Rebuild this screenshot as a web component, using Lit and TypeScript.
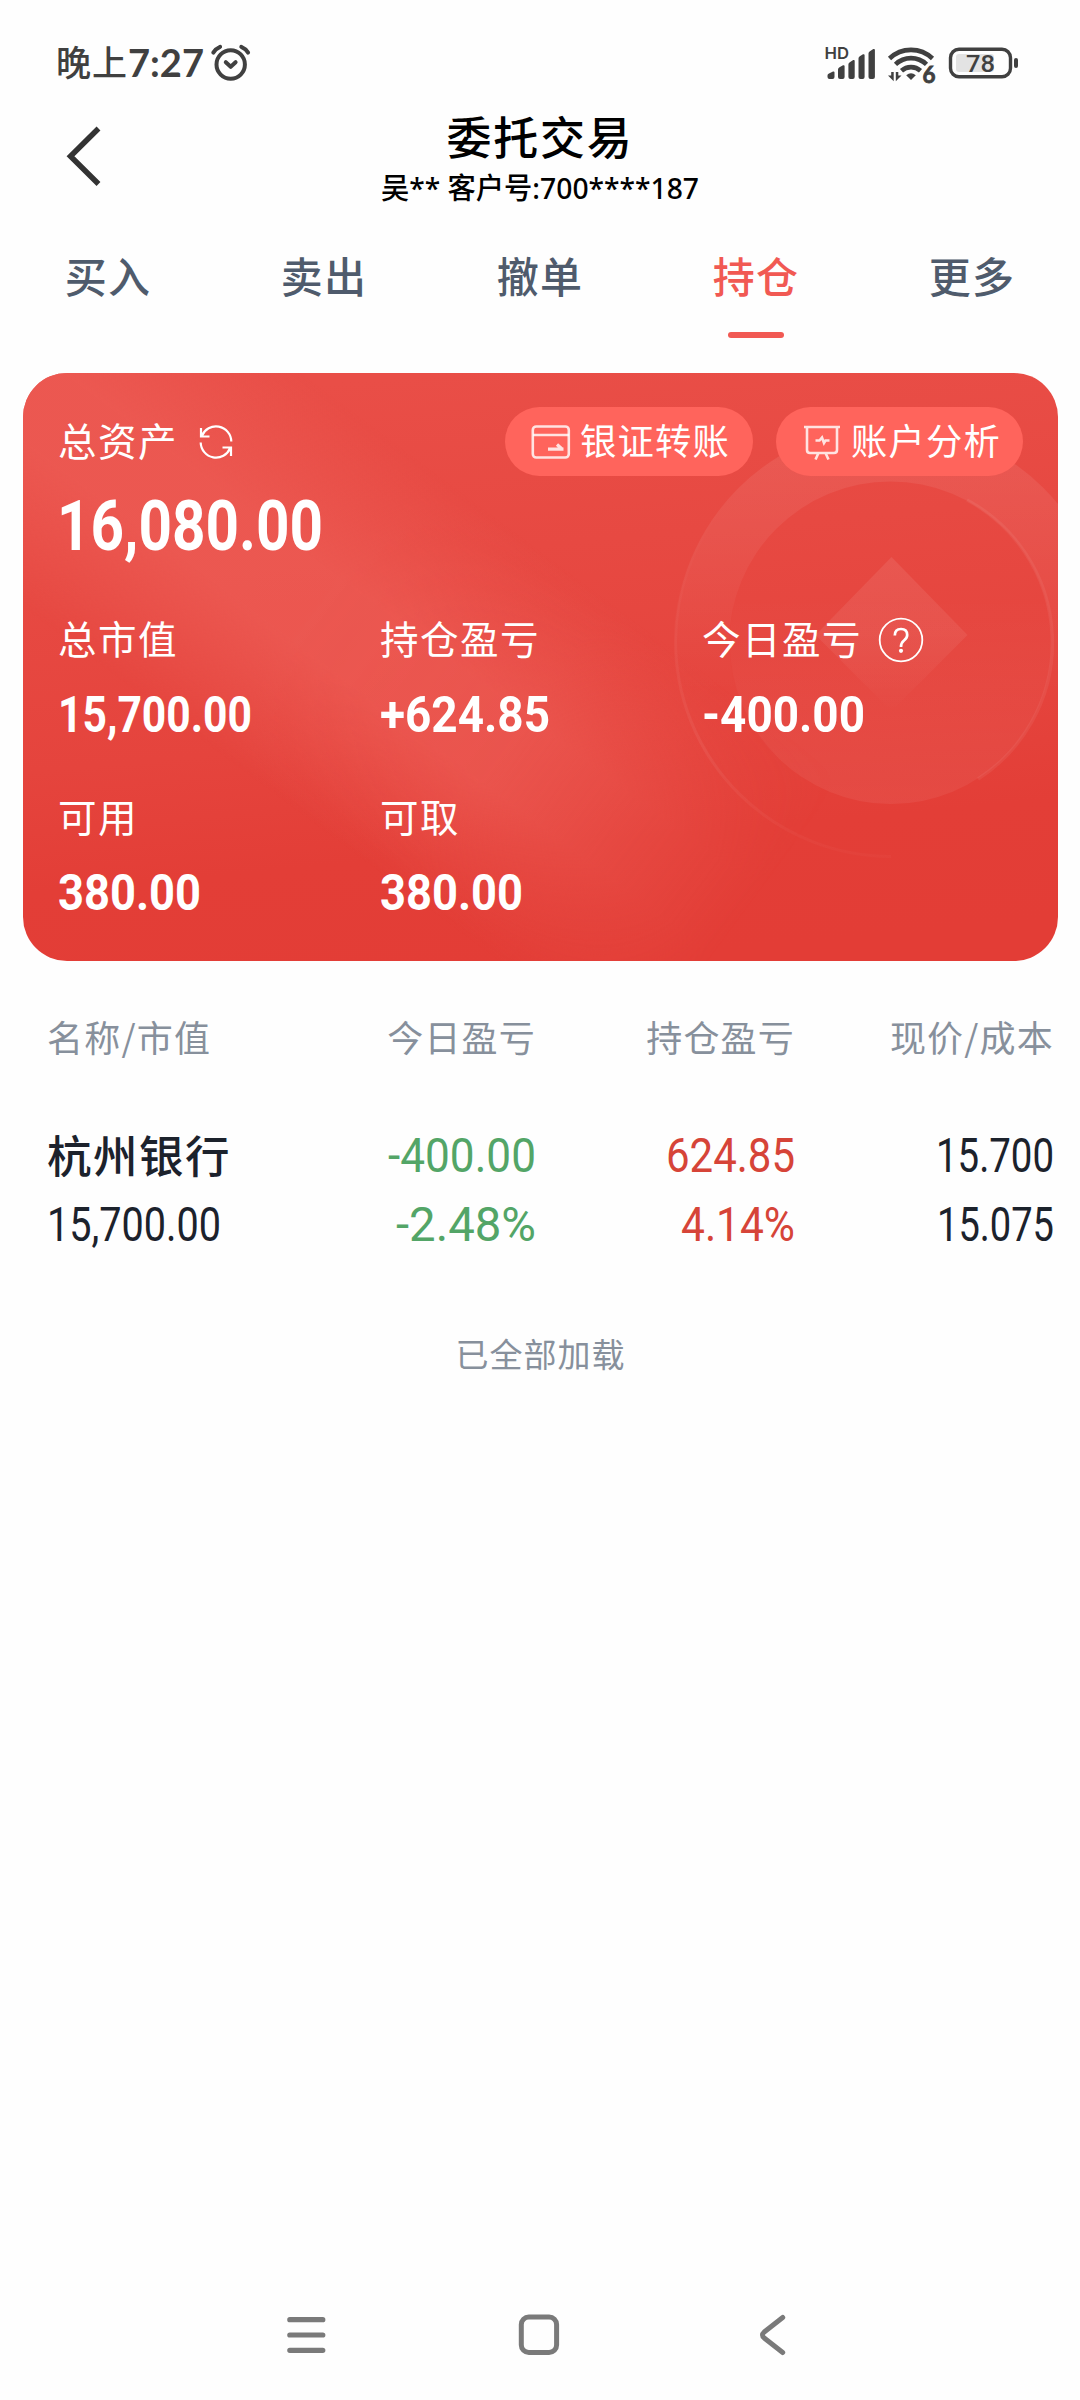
import { LitElement, html, svg, css } from "lit";
import { customElement, property } from "lit/decorators.js";

/** Condensed numeric text: `cap` is the digit height, `width` the advance width. */
@customElement("din-number")
class DinNumber extends LitElement {
  @property() value = "";
  @property({ type: Number }) width = 100;
  @property({ type: Number }) cap = 36;
  static styles = css`
    :host { display: block; }
    svg { display: block; overflow: visible; }
    text { font-family: Roboto, "Liberation Sans", sans-serif; fill: currentColor; }
  `;
  render() {
    return html`<svg width=${this.width} height=${this.cap}>
      <text x="0" y=${this.cap} font-size=${this.cap / 0.715} textLength=${this.width}
        lengthAdjust="spacingAndGlyphs">${this.value}</text>
    </svg>`;
  }
}

@customElement("status-bar")
class StatusBar extends LitElement {
  static styles = css`
    :host { display: flex; height: 100px; padding: 0 62px 0 56px; box-sizing: border-box;
      justify-content: space-between; color: #404040; }
    svg { display: block; overflow: visible; }
    .left { display: flex; }
    .zh { font: 500 35px/50px "Noto Sans CJK SC", sans-serif; padding-top: 36px; letter-spacing: 1px; }
    text { fill: #404040; font-family: Lato, sans-serif; font-weight: 700; }
    .hd { font-family: Inter, sans-serif; font-weight: 600; }
    .level { font-family: Roboto, sans-serif; font-weight: 500; }
  `;
  render() {
    return html`
      <div class="left">
        <span class="zh">晚上</span>
        <svg width="80" height="100" viewBox="128 0 80 100">
          <text x="128" y="77" font-size="39" textLength="76" lengthAdjust="spacingAndGlyphs">7:27</text>
        </svg>
        <svg width="44" height="100" viewBox="208 0 44 100" fill="none" stroke="#404040" stroke-width="4" stroke-linecap="round" stroke-linejoin="round">
          <circle cx="230.7" cy="64.5" r="14.2"/>
          <path d="M225.8 62.2l4.9 4.6 4.9-4.6M213.3 52.6q2.500-4 6.800-5.800M248.1 52.6q-2.500-4-6.800-5.800"/>
        </svg>
      </div>
      <svg width="196" height="100" viewBox="822 0 196 100" fill="#404040">
        <text class="hd" x="824.500" y="59" font-size="16.500" textLength="24.500" lengthAdjust="spacingAndGlyphs">HD</text>
        <path d="M827.500 77v-1.500q0-1.500 1.500-2l4-2q1.500-.5 1.500 1v4.500q0 2-2 2h-3q-2 0-2-2z"/>
        <path d="M838 77v-7.500q0-1.500 1.500-2.200l3.500-2q1.600-.6 1.600 1v10.700q0 2-2 2h-2.600q-2 0-2-2z"/>
        <path d="M848.400 77v-12.500q0-1.500 1.400-2.200l3.400-2.200q1.500-.6 1.500 1v15.900q0 2-2 2h-2.300q-2 0-2-2z"/>
        <path d="M858.500 77v-18.500q0-1.500 1.300-2.200l3.200-2q1.600-.6 1.600 1v21.700q0 2-2 2h-2.100q-2 0-2-2z"/>
        <path d="M868.500 77v-23.500q0-1.500 1.400-2.200l3.400-2.200q1.600-.6 1.600 1v26.900q0 2-2 2h-2.400q-2 0-2-2z"/>
        <g fill="none" stroke="#404040" stroke-width="4.600">
          <path d="M889.500 58.500a31 31 0 0 1 43 0"/>
          <path d="M895.500 64.300a22.500 22.500 0 0 1 31 0"/>
          <path d="M901.500 70.800a14 14 0 0 1 19 0"/>
        </g>
        <path d="M906.200 75.200q4.800-3.800 9.600 0l-4.800 4.800z"/>
        <path d="M891.200 72h2.500v9.200l-5.700-5.700h3.200zM895.800 81.200v-9.200h2.500v3.500h3.200z"/>
        <text x="922.500" y="82.500" font-size="22" font-weight="900" textLength="13" lengthAdjust="spacingAndGlyphs" stroke="#404040" stroke-width=".8">6</text>
        <rect x="956" y="54" width="38" height="18" rx="3" fill="#e3e3e3"/>
        <rect x="950.500" y="49.300" width="60" height="27.500" rx="8.500" fill="none" stroke="#404040" stroke-width="3.400"/>
        <rect x="1014" y="58" width="4" height="10" rx="2"/>
        <text class="level" x="966" y="71.800" font-size="24" textLength="29" lengthAdjust="spacingAndGlyphs">78</text>
      </svg>`;
  }
}

@customElement("page-header")
class PageHeader extends LitElement {
  static styles = css`
    :host { display: grid; grid-template-columns: 170px 1fr 170px; height: 130px; color: #000; }
    .back { display: block; margin: 24px 0 0 64px; }
    .mid { display: flex; flex-direction: column; align-items: center; }
    .title { font: 500 45px/60px "Noto Sans CJK SC", sans-serif; letter-spacing: 1.800px; margin-top: 6px; }
    svg { display: block; overflow: visible; }
    text { font: 500 29px "Noto Sans", "Noto Sans CJK SC", sans-serif; }
  `;
  render() {
    return html`
      <svg class="back" width="40" height="64" viewBox="64 124 40 64" fill="none" stroke="#333" stroke-width="5.500">
        <path d="M98.500 128.500L70.500 156.300l28 27.700"/>
      </svg>
      <div class="mid">
        <div class="title">委托交易</div>
        <svg width="318" height="34"><text x="0" y="32.500" textLength="318" lengthAdjust="spacingAndGlyphs">吴** 客户号:700****187</text></svg>
      </div>`;
  }
}

@customElement("trade-tabs")
class TradeTabs extends LitElement {
  static styles = css`
    :host { display: grid; grid-template-columns: repeat(5, 1fr); height: 143px; }
    .tab { display: flex; flex-direction: column; align-items: center; color: #4f5b6c;
      font: 500 42px/60px "Noto Sans CJK SC", sans-serif; letter-spacing: 1.200px; padding-top: 15px; }
    .on { color: #f15953; }
    .bar { width: 56px; height: 6px; border-radius: 3px; background: #f15953; margin-top: 27px; }
  `;
  render() {
    return ["买入", "卖出", "撤单", "持仓", "更多"].map((t) => t === "持仓"
      ? html`<div class="tab on"><span>${t}</span><i class="bar"></i></div>`
      : html`<div class="tab"><span>${t}</span></div>`);
  }
}

const coinArt = svg`
  <defs>
    <linearGradient id="base" x1="0.400" y1="0" x2="0.560" y2="1">
      <stop offset="0" stop-color="#e94e47"/><stop offset=".3" stop-color="#e74942"/>
      <stop offset=".6" stop-color="#e5443d"/>
      <stop offset=".8" stop-color="#e33e37"/><stop offset="1" stop-color="#e33d36"/>
    </linearGradient>
    <linearGradient id="band" gradientUnits="userSpaceOnUse" x1="138" y1="337" x2="349" y2="53">
      <stop offset="0" stop-color="#ec5a53" stop-opacity="0"/><stop offset=".38" stop-color="#ec5a53" stop-opacity=".85"/>
      <stop offset=".6" stop-color="#ec5a53" stop-opacity=".85"/><stop offset="1" stop-color="#ec5a53" stop-opacity="0"/>
    </linearGradient>
    <linearGradient id="fade" gradientUnits="userSpaceOnUse" x1="300" y1="220" x2="725" y2="535">
      <stop offset="0" stop-color="#fff"/><stop offset=".45" stop-color="#fff" stop-opacity=".9"/><stop offset="1" stop-color="#fff" stop-opacity="0"/>
    </linearGradient>
    <mask id="bandMask"><rect width="1035" height="588" fill="url(#fade)"/></mask>
    <linearGradient id="ring" x1="0" y1="0" x2="0" y2="1">
      <stop offset="0" stop-color="#fff" stop-opacity=".085"/><stop offset=".25" stop-color="#fff" stop-opacity=".06"/>
      <stop offset=".62" stop-color="#fff" stop-opacity="0"/>
    </linearGradient>
    <linearGradient id="edge" x1="0" y1="0" x2="0" y2="1">
      <stop offset="0" stop-color="#fff" stop-opacity="0"/><stop offset=".4" stop-color="#fff" stop-opacity=".04"/>
      <stop offset=".7" stop-color="#fff" stop-opacity=".06"/><stop offset="1" stop-color="#fff" stop-opacity=".02"/>
    </linearGradient>
    <linearGradient id="inner" x1="0" y1="0" x2="0" y2="1">
      <stop offset=".35" stop-color="#fff" stop-opacity="0"/><stop offset="1" stop-color="#fff" stop-opacity=".06"/>
    </linearGradient>
    <linearGradient id="gem" x1="0" y1="0" x2="0" y2="1">
      <stop offset="0" stop-color="#fff" stop-opacity=".085"/><stop offset=".5" stop-color="#fff" stop-opacity=".065"/>
      <stop offset="1" stop-color="#fff" stop-opacity="0"/>
    </linearGradient>
  </defs>
  <rect width="1035" height="588" fill="url(#base)"/>
  <rect width="1035" height="588" fill="url(#band)" mask="url(#bandMask)"/>
  <path fill="url(#ring)" fill-rule="evenodd" d="M652 268a216 216 0 1 1 432 0a216 216 0 1 1 -432 0zM706 270a161.500 161.500 0 1 0 323 0a161.500 161.500 0 1 0 -323 0z"/>
  <path d="M868 483.500A215.500 215.500 0 0 1 652.500 268A215.500 215.500 0 0 1 700 134" fill="none" stroke="url(#edge)" stroke-width="3"/>
  <circle cx="868" cy="270" r="161" fill="url(#inner)"/>
  <path d="M944 127A162 162 0 0 1 955 406" fill="none" stroke="#fff" stroke-opacity=".06" stroke-width="3.500"/>
  <path d="M868.500 184l76 78-76 76-76-76z" fill="url(#gem)"/>`;

@customElement("asset-card")
class AssetCard extends LitElement {
  static styles = css`
    :host { display: block; position: relative; margin: 0 22px 0 23px; height: 588px; border-radius: 44px;
      overflow: hidden; color: #fff; font: 400 38.500px/56px "Noto Sans CJK SC", sans-serif; letter-spacing: 1.500px; }
    svg { display: block; overflow: visible; }
    .art { position: absolute; left: 0; top: 0; }
    .body { position: relative; padding: 34px 35px 0 36px; }
    .top { display: flex; align-items: center; height: 69px; }
    .top > .sync { margin-left: 21px; margin-right: auto; flex: none; }
    .text { display: block; margin: -6px 0 0 -1px; }
    .pill { display: flex; align-items: center; width: 248px; height: 69px; box-sizing: border-box; border-radius: 35px;
      background: #ff645c; font-size: 36.300px; letter-spacing: 1.200px; padding-left: 26px; margin-left: 23px; white-space: nowrap; }
    .pill svg { margin-right: 10px; flex: none; }
    .pill + .pill { margin-left: 23px; width: 247px; }
    din-number { font-weight: 700; letter-spacing: 0; }
    .total { margin: 24px 0 0 -2px; }
    .grid { display: grid; grid-template-columns: 322px 322px 1fr; margin-top: 61px; row-gap: 58px; }
    .label { display: flex; align-items: center; height: 56px; }
    .label .text { margin-top: -4px; }
    .label svg { margin-left: 16px; margin-top: 1px; }
    .cell din-number { margin-top: 29px; margin-bottom: -1px; margin-left: -1px; }
  `;
  cell(label: string, value: string, width: number, help = false) {
    return html`<div class="cell">
      <div class="label"><span class="text">${label}</span>${help ? html`<svg width="46" height="46" viewBox="0 0 46 46" fill="none" stroke="#fff">
        <circle cx="23" cy="23" r="21.300" stroke-width="1.800"/>
        <path d="M16.800 18.500q0-6.500 6.200-6.500t6.200 6q0 3-3.200 5.500t-3 6.500" stroke-width="2.700"/>
        <circle cx="23" cy="33.800" r="2.100" fill="#fff" stroke="none"/></svg>` : ""}</div>
      <din-number .value=${value} .width=${width} .cap=${36}></din-number>
    </div>`;
  }
  render() {
    return html`
      <svg class="art" width="1035" height="588">${coinArt}</svg>
      <div class="body">
        <div class="top">
          <span class="text">总资产</span>
          <svg class="sync" width="34" height="34" viewBox="0 0 34 34" fill="none" stroke="#fff" stroke-width="2.200">
            <path d="M2 3v8.500h8.500M2.800 11A15.300 15.300 0 0 1 32.300 16.500M32 31v-8.500h-8.500M31.200 23A15.300 15.300 0 0 1 1.700 17.500"/>
          </svg>
          <div class="pill">
            <svg width="40" height="36" viewBox="0 0 40 36" fill="none" stroke="#fff" stroke-opacity=".82" stroke-width="2.600">
              <rect x="1.800" y="2.500" width="36" height="31" rx="3.500"/>
              <path d="M2 11h36"/><path d="M17 25.200h15.500M26 20.500l5 4.500" stroke-width="3.200"/>
            </svg><span class="text">银证转账</span></div>
          <div class="pill">
            <svg width="40" height="38" viewBox="0 0 40 38" fill="none" stroke="#fff" stroke-opacity=".82" stroke-width="2.600">
              <path d="M2 4h36M5 4v23q0 3 3 3h24q3 0 3-3v-23M16.500 30l-3 6.500M23.500 30l3 6.500M13.500 17.500h4l2.500-3 2 5.500 1.500-2.500h4"/>
            </svg><span class="text">账户分析</span></div>
        </div>
        <din-number class="total" .value=${"16,080.00"} .width=${266} .cap=${50}></din-number>
        <div class="grid">
          ${this.cell("总市值", "15,700.00", 194)}
          ${this.cell("持仓盈亏", "+624.85", 170)}
          ${this.cell("今日盈亏", "-400.00", 163, true)}
          ${this.cell("可用", "380.00", 143)}
          ${this.cell("可取", "380.00", 143)}
        </div>
      </div>`;
  }
}

@customElement("holdings-table")
class HoldingsTable extends LitElement {
  static styles = css`
    :host { display: block; padding: 48px 26px 0 47px; font: 400 36px/54px "Noto Sans CJK SC", sans-serif; color: #1c222c; }
    .row { display: grid; grid-template-columns: 230px 259px 259px 259px; }
    .row > * { justify-self: end; }
    .row > :first-child { justify-self: start; }
    .head { color: #87909c; letter-spacing: 1.200px; }
    .cells { margin-top: 61px; }
    .second { margin-top: 7px; }
    .cells, .second { height: 62px; align-items: center; }
    .name { font: 500 44.500px/62px "Noto Sans CJK SC", sans-serif; letter-spacing: 1.500px; white-space: nowrap; margin-top: -2px; }
    .down { color: #53a567; }
    .up { color: #d64438; }
    .done { text-align: center; color: #87909c; font-size: 33px; letter-spacing: 1px; margin: 71px 0 0 -20px; }
  `;
  n(value: string, width: number, cls = "") {
    return html`<din-number class=${cls} .value=${value} .width=${width} .cap=${34}></din-number>`;
  }
  render() {
    return html`
      <div class="row head"><span>名称/市值</span><span>今日盈亏</span><span>持仓盈亏</span><span>现价/成本</span></div>
      <div class="row cells"><span class="name">杭州银行</span>${this.n("-400.00", 148, "down")}${this.n("624.85", 129, "up")}${this.n("15.700", 118)}</div>
      <div class="row second">${this.n("15,700.00", 174)}${this.n("-2.48%", 140, "down")}${this.n("4.14%", 114, "up")}${this.n("15.075", 117)}</div>
      <div class="done">已全部加载</div>`;
  }
}

@customElement("app-root")
class AppRoot extends LitElement {
  static styles = css`
    :host { display: flex; flex-direction: column; width: 1080px; height: 2400px; background: #fefefe; overflow: hidden; }
    .nav { display: grid; grid-template-columns: 232px 241px 30px; margin-top: auto; padding: 0 292px 43px 285px; }
  `;
  render() {
    return html`
      <status-bar></status-bar>
      <page-header></page-header>
      <trade-tabs></trade-tabs>
      <asset-card></asset-card>
      <holdings-table></holdings-table>
      <div class="nav">
        <svg width="43" height="44" viewBox="285 2313 43 44" fill="none" stroke="#7a7a7a" stroke-width="5.200" stroke-linecap="round">
          <path d="M289.800 2319.700h33M289.800 2335h33M289.800 2350.300h33"/>
        </svg>
        <svg width="44" height="44" viewBox="517 2313 44 44" fill="none" stroke="#7a7a7a" stroke-width="5">
          <rect x="521.300" y="2317" width="35.300" height="35.500" rx="7.500"/>
        </svg>
        <svg width="30" height="44" viewBox="758 2313 30 44" fill="none" stroke="#7a7a7a" stroke-width="5" stroke-linecap="round" stroke-linejoin="round">
          <path d="M782.700 2317.500l-18.500 14.500q-3.400 3 0 6l18.500 14.500"/>
        </svg>
      </div>`;
  }
}
